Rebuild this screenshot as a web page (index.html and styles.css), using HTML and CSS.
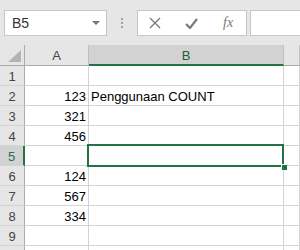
FILE: index.html
```html
<!DOCTYPE html>
<html>
<head>
  <title>Sheet</title>
  <link rel="stylesheet" href="styles.css">
</head>
<body>
  <div class="toolbar">
    <div class="name-box">
      <span>B5</span>
      <span class="caret"></span>
    </div>
    <div class="sep"><i></i><i></i><i></i></div>
    <div class="fx-buttons">
      <svg class="ico" width="12" height="12" viewBox="0 0 12 12"><path d="M1 1 L11 11 M11 1 L1 11" stroke="#7a7a7a" stroke-width="1.4" fill="none"/></svg>
      <svg class="ico" width="13" height="11" viewBox="0 0 13 11"><path d="M1 6 L5 10 L12 1" stroke="#7a7a7a" stroke-width="2.2" fill="none"/></svg>
      <span class="fx">fx</span>
    </div>
    <div class="formula"></div>
  </div>

  <div class="sheet">
    <div class="hd corner"><span class="tri"></span></div>
    <div class="hd col">A</div>
    <div class="hd col sel-col">B</div>
    <div class="hd col"></div>

    <div class="hd row">1</div><div class="cell num"></div><div class="cell"></div><div class="cell"></div>
    <div class="hd row">2</div><div class="cell num">123</div><div class="cell">Penggunaan COUNT</div><div class="cell"></div>
    <div class="hd row">3</div><div class="cell num">321</div><div class="cell"></div><div class="cell"></div>
    <div class="hd row">4</div><div class="cell num">456</div><div class="cell"></div><div class="cell"></div>
    <div class="hd row sel-row">5</div><div class="cell num"></div><div class="cell active"><span class="box"><span class="handle"></span></span></div><div class="cell"></div>
    <div class="hd row">6</div><div class="cell num">124</div><div class="cell"></div><div class="cell"></div>
    <div class="hd row">7</div><div class="cell num">567</div><div class="cell"></div><div class="cell"></div>
    <div class="hd row">8</div><div class="cell num">334</div><div class="cell"></div><div class="cell"></div>
    <div class="hd row">9</div><div class="cell num"></div><div class="cell"></div><div class="cell"></div>
    <div class="hd row"></div><div class="cell num"></div><div class="cell"></div><div class="cell"></div>
  </div>
</body>
</html>
```

FILE: styles.css
```css
body {
  margin: 0;
  width: 300px;
  height: 250px;
  overflow: hidden;
  background: #fff;
  font-family: "Liberation Sans", Arial, sans-serif;
  font-size: 13px;
}

/* formula bar */
.toolbar {
  height: 45px;
  box-sizing: border-box;
  background: #e6e6e6;
  display: flex;
  align-items: flex-start;
  padding: 10px 0 0 4px;
  overflow: hidden;
}

.toolbar > * {
  flex-shrink: 0;
}

.name-box {
  width: 103px;
  height: 26px;
  box-sizing: border-box;
  background: #fff;
  border: 1px solid #c6c6c6;
  display: flex;
  align-items: center;
  justify-content: space-between;
  padding: 0 6px 0 7px;
  color: #333;
  font-size: 14px;
}

.caret {
  width: 0;
  height: 0;
  border-left: 4px solid transparent;
  border-right: 4px solid transparent;
  border-top: 4px solid #777;
}

.sep {
  width: 30px;
  height: 26px;
  display: flex;
  flex-direction: column;
  align-items: center;
  justify-content: center;
  gap: 2px;
}

.sep i {
  width: 2px;
  height: 2px;
  background: #a0a0a0;
}

.fx-buttons {
  width: 110px;
  height: 26px;
  box-sizing: border-box;
  background: #fff;
  border: 1px solid #c6c6c6;
  display: flex;
  align-items: center;
  padding-left: 11px;
  gap: 24px;
}

.fx {
  font-family: "Liberation Serif", "Times New Roman", serif;
  font-style: italic;
  font-size: 14px;
  color: #7a7a7a;
  margin-left: 1px;
}

.formula {
  width: 80px;
  height: 26px;
  box-sizing: border-box;
  margin-left: 3px;
  background: #fff;
  border: 1px solid #c6c6c6;
}

/* grid */
.sheet {
  display: grid;
  grid-template-columns: 25px 64px 195px 1fr;
  grid-template-rows: 21px;
  grid-auto-rows: 20px;
}

.hd {
  background: #e6e6e6;
  color: #444;
  box-sizing: border-box;
  display: flex;
  align-items: flex-end;
  justify-content: center;
  line-height: 15px;
  padding-bottom: 2px;
}

.corner {
  border-right: 1px solid #ababab;
  border-bottom: 1px solid #ababab;
  position: relative;
}

.tri {
  position: absolute;
  right: 3px;
  bottom: 3px;
  width: 13px;
  height: 12px;
  background: #b4b4b4;
  clip-path: polygon(100% 0, 100% 100%, 0 100%);
}

.col {
  border-right: 1px solid #bfbfbf;
  border-bottom: 1px solid #ababab;
}

.sel-col {
  background: #d2d2d2;
  color: #1e5e3a;
  border-bottom: 2px solid #217346;
  padding-bottom: 1px;
}

.row {
  border-right: 1px solid #ababab;
  border-bottom: 1px solid #d4d4d4;
  padding-bottom: 1px;
}

.sel-row {
  background: #d2d2d2;
  color: #217346;
  border-right: 2px solid #217346;
}

.cell {
  box-sizing: border-box;
  border-right: 1px solid #d4d4d4;
  border-bottom: 1px solid #d4d4d4;
  display: flex;
  align-items: flex-end;
  line-height: 15px;
  padding: 0 2px 1px;
  color: #000;
  white-space: nowrap;
}

.num {
  justify-content: flex-end;
}

/* selected cell outline */
.active {
  position: relative;
}

.box {
  position: absolute;
  top: -2px;
  left: -2px;
  right: -1px;
  bottom: -2px;
  border: 2px solid #217346;
}

.handle {
  position: absolute;
  right: -5px;
  bottom: -5px;
  width: 5px;
  height: 5px;
  background: #217346;
  border-left: 1px solid #fff;
  border-top: 1px solid #fff;
}
```
